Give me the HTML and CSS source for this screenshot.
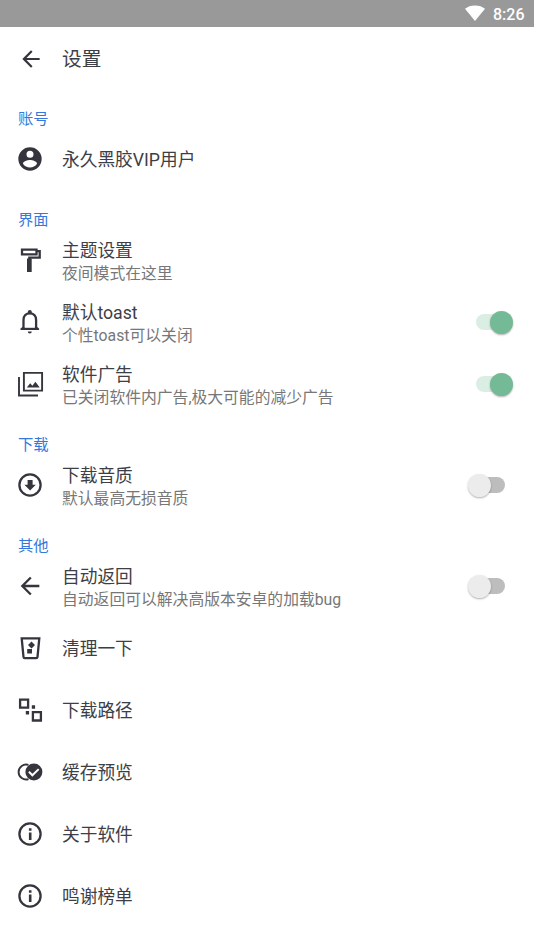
FILE: index.html
```html
<!DOCTYPE html>
<html lang="zh-CN">
<head>
<meta charset="utf-8">
<title>设置</title>
<link rel="stylesheet" href="styles.css">
</head>
<body>
<div class="status">
  <svg class="wifi" viewBox="0 0 20 16"><path d="M10 16 0 3.700C2.600 1.600 6 .4 10 .4s7.400 1.200 10 3.300z"/></svg>
  <span class="clock">8:26</span>
</div>
<header class="appbar">
  <svg class="icon back" viewBox="0 0 24 24"><path d="M20 11H7.830l5.590-5.590L12 4l-8 8 8 8 1.410-1.410L7.830 13H20z"/></svg>
  <h1>设置</h1>
</header>
<main>
  <h2>账号</h2>
  <div class="row">
    <svg class="icon" viewBox="0 0 24 24"><path d="M12 2a10 10 0 1 0 0 20 10 10 0 0 0 0-20zm0 3a3 3 0 1 1 0 6 3 3 0 0 1 0-6zm0 14.200a7.200 7.200 0 0 1-6-3.220c.03-1.990 4-3.080 6-3.080s5.970 1.090 6 3.080a7.200 7.200 0 0 1-6 3.220z"/></svg>
    <div class="text"><p class="name">永久黑胶VIP用户</p></div>
  </div>

  <h2>界面</h2>
  <div class="row">
    <svg class="icon" viewBox="0 0 28 28"><path class="line" d="M6 3.700h14.500v4.600H6zM21 5.200h2.700v6.500H13.300v3"/><path d="M11 12.500h4.700V26H11z"/></svg>
    <div class="text double"><p class="name">主题设置</p><p class="note">夜间模式在这里</p></div>
  </div>
  <div class="row">
    <svg class="icon" viewBox="0 0 28 28"><path class="line" d="M7.500 20.500V12c0-4 2.500-6.700 6.300-6.700s6.300 2.700 6.300 6.700v8.500"/><path d="M4.500 20.400l3-2.200h12.600l3 2.200v1.500H4.500zM11.800 5V4a2 2 0 0 1 4 0v1zM11.800 23.500h4a2 2 0 0 1-4 0z"/><path class="clear" d="M8.700 17.500h10.200v2.300H8.700z"/></svg>
    <div class="text double"><p class="name">默认toast</p><p class="note">个性toast可以关闭</p></div>
    <span class="switch on"></span>
  </div>
  <div class="row">
    <svg class="icon" viewBox="0 0 28 28"><path class="line thin" d="M7.900 2.900h18.200v17.700H7.900zM3 7v18.500h19"/><path d="M10.800 17.500l3.400-4.300 2.200 2.600 3-4 4.300 5.700z"/></svg>
    <div class="text double"><p class="name">软件广告</p><p class="note">已关闭软件内广告,极大可能的减少广告</p></div>
    <span class="switch on"></span>
  </div>

  <h2>下载</h2>
  <div class="row">
    <svg class="icon" viewBox="0 0 28 28"><circle class="line" cx="14" cy="14" r="10.600"/><path d="M11.600 9h5v4.800h3.200L14.100 19.500 8.400 13.800h3.200z"/></svg>
    <div class="text double"><p class="name">下载音质</p><p class="note">默认最高无损音质</p></div>
    <span class="switch"></span>
  </div>

  <h2>其他</h2>
  <div class="row">
    <svg class="icon" viewBox="0 0 24 24"><path d="M20 11H7.830l5.590-5.590L12 4l-8 8 8 8 1.410-1.410L7.830 13H20z"/></svg>
    <div class="text double"><p class="name">自动返回</p><p class="note">自动返回可以解决高版本安卓的加载bug</p></div>
    <span class="switch"></span>
  </div>
  <div class="row">
    <svg class="icon" viewBox="0 0 28 28"><path class="line" d="M5.700 4.300h17.600L21.500 23q-.1 1.200-1.300 1.200H8.800q-1.200 0-1.300-1.200z"/><path d="M15.500 7.500l3.500 3.500-3.500 3.500-3.500-3.500zM11.200 15h4.800v4.600h-4.800z"/></svg>
    <div class="text"><p class="name">清理一下</p></div>
  </div>
  <div class="row">
    <svg class="icon" viewBox="0 0 28 28"><path class="line" d="M4.100 3.700h8v8h-8zM16.900 16.200h8v8.300h-8z"/><path d="M15.800 9.300h3.300v3.400h-3.300zM9.800 15h3.300v3.400H9.800z"/></svg>
    <div class="text"><p class="name">下载路径</p></div>
  </div>
  <div class="row">
    <svg class="icon" viewBox="0 0 28 28"><path class="line thin" d="M12.500 6.900a7.500 7.500 0 1 0 0 14.200"/><circle cx="17.900" cy="14" r="8.500"/><path class="check" d="M12.900 13.800l3.500 3.500 6.300-6.200"/></svg>
    <div class="text"><p class="name">缓存预览</p></div>
  </div>
  <div class="row">
    <svg class="icon" viewBox="0 0 28 28"><circle class="line" cx="14" cy="14" r="10.600"/><path d="M12.900 8.200h2.600v2.500h-2.600zM12.900 12.500h2.600v7.500h-2.600z"/></svg>
    <div class="text"><p class="name">关于软件</p></div>
  </div>
  <div class="row">
    <svg class="icon" viewBox="0 0 28 28"><circle class="line" cx="14" cy="14" r="10.600"/><path d="M12.900 8.200h2.600v2.500h-2.600zM12.900 12.500h2.600v7.500h-2.600z"/></svg>
    <div class="text"><p class="name">鸣谢榜单</p></div>
  </div>
</main>
</body>
</html>
```
FILE: styles.css
```css
* { box-sizing: border-box; margin: 0; padding: 0; }
body {
  background: #fff;
  color: #3e3e46;
  font-family: Roboto, "Noto Sans CJK SC", sans-serif;
  height: 949px;
  overflow: hidden;
}
.status {
  height: 27px;
  background: #999;
  color: #fff;
  display: flex;
  align-items: center;
  justify-content: flex-end;
  gap: 8px;
  padding-right: 9.500px;
}
.wifi { width: 20px; height: 16px; margin-bottom: 2px; fill: #fff; }
.clock { font-size: 16px; line-height: 27px; font-weight: 500; padding-top: 2px; }
.appbar {
  height: 62px;
  display: flex;
  align-items: center;
  padding-left: 16px;
  gap: 18px;
}
.icon { width: 28px; height: 28px; flex: none; fill: #35353e; }
.icon.back { width: 26px; height: 26px; margin: 1px 0 0 2px; }
h1 { font-size: 19.700px; font-weight: 400; line-height: 28px; padding-top: 3px; }
h2 {
  height: 39px;
  padding: 18.500px 0 0 18px;
  font-size: 15.300px;
  font-weight: 400;
  line-height: 22px;
  color: #3478dc;
}
.row {
  height: 62px;
  display: flex;
  align-items: center;
  gap: 18px;
  padding: 0 29.500px 0 16px;
}
.text { flex: 1; white-space: nowrap; padding-top: 1px; }
.double { padding-top: 3.500px; }
.name { font-size: 17.700px; line-height: 24px; }
.note { font-size: 15.800px; line-height: 22px; color: #777; }
.line { fill: none; stroke: #35353e; stroke-width: 2.300; }
.thin { stroke-width: 1.900; }
.clear { fill: #fff; }
.check { fill: none; stroke: #fff; stroke-width: 2; }
.switch {
  width: 29px;
  height: 16px;
  border-radius: 8px;
  background: #bdbdbd;
  display: flex;
  align-items: center;
}
.switch::before {
  content: "";
  flex: none;
  width: 23px;
  height: 23px;
  margin-left: -8px;
  border-radius: 50%;
  background: #ececec;
  box-shadow: 0 1px 2px rgba(0, 0, 0, .3);
}
.switch.on { background: #dbeee4; }
.switch.on::before { margin-left: 14px; background: #75ba96; }
```
